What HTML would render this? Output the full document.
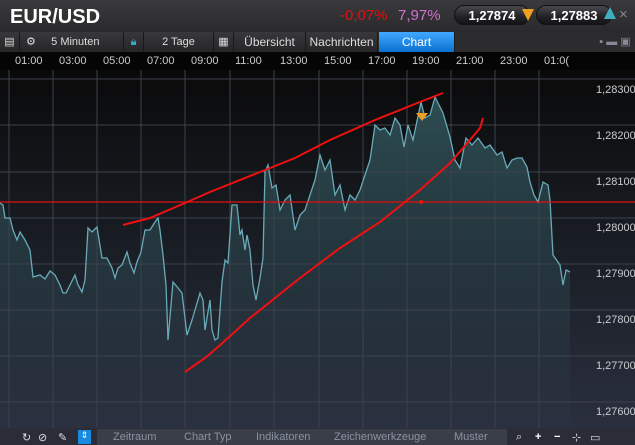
<!DOCTYPE html>
<html><head><meta charset="utf-8"><style>
*{margin:0;padding:0;box-sizing:border-box}
body{width:635px;height:445px;overflow:hidden;background:#111;font-family:"Liberation Sans",sans-serif;position:relative}
.top{position:absolute;left:0;top:0;width:635px;height:32px;background:linear-gradient(#3a3a3c,#2a2a2c)}
.title{position:absolute;left:10px;top:6px;color:#fff;font-size:20px;font-weight:bold}
.pill{position:absolute;top:5px;height:20px;border-radius:10px;background:linear-gradient(#4a4a4e,#222226 60%,#141418);color:#fff;font-weight:bold;font-size:13px;text-align:center;line-height:20px;border:1px solid #111}
.bar{position:absolute;left:0;top:32px;width:635px;height:20px;background:#2c2c2e}
.bar div{position:absolute;top:0;height:20px;line-height:20px;color:#ddd;font-size:11px;text-align:center;background:linear-gradient(#38383a,#262628);border-right:1px solid #1a1a1a}
.axis{position:absolute;left:0;top:52px;width:635px;height:18px;background:#050505;color:#ccc;font-size:11px}
.axis span{position:absolute;top:3px}
.bot{position:absolute;left:0;top:428px;width:635px;height:17px;background:#2a2d38}
.bot span{position:absolute;top:3px;color:#8a92a0;font-size:11px}
</style></head><body>
<div class="top">
<div class="title">EUR/USD</div>
<div style="position:absolute;left:340px;top:7px;color:#e01010;font-size:15px">-0,07%</div>
<div style="position:absolute;left:398px;top:7px;color:#d070d0;font-size:15px">7,97%</div>
<div class="pill" style="left:454px;width:76px">1,27874</div>
<div style="position:absolute;left:522px;top:9px;width:0;height:0;border-left:6px solid transparent;border-right:6px solid transparent;border-top:12px solid #f0a020"></div>
<div class="pill" style="left:536px;width:76px">1,27883</div>
<div style="position:absolute;left:604px;top:7px;width:0;height:0;border-left:6px solid transparent;border-right:6px solid transparent;border-bottom:12px solid #40b0c0"></div>
<div style="position:absolute;left:619px;top:6px;color:#889;font-size:15px">×</div>
</div>
<div class="bar">
<div style="left:0;width:20px">▤</div>
<div style="left:20px;width:104px;text-align:left;padding-left:6px">⚙ &nbsp;&nbsp;&nbsp;&nbsp;5 Minuten</div>
<div style="left:124px;width:20px;color:#3ac">🔒︎</div>
<div style="left:144px;width:70px">2 Tage</div>
<div style="left:214px;width:20px">▦</div>
<div style="left:234px;width:72px;font-size:12px">Übersicht</div>
<div style="left:306px;width:72px;font-size:12px">Nachrichten</div>
<div style="left:379px;width:76px;font-size:12px;color:#fff;background:linear-gradient(#40a8ff,#0a70d0)">Chart</div>
<div style="left:595px;width:40px;background:none;border:none;color:#889">▪ ▬ ▣</div>
</div>
<div class="axis">
<span style="left:15px">01:00</span><span style="left:59px">03:00</span><span style="left:103px">05:00</span><span style="left:147px">07:00</span><span style="left:191px">09:00</span><span style="left:235px">11:00</span><span style="left:280px">13:00</span><span style="left:324px">15:00</span><span style="left:368px">17:00</span><span style="left:412px">19:00</span><span style="left:456px">21:00</span><span style="left:500px">23:00</span><span style="left:544px">01:0(</span>
</div>
<svg style="position:absolute;left:0;top:70px" width="635" height="358" viewBox="0 70 635 358">
<defs><linearGradient id="bg" x1="0" y1="0" x2="0" y2="1"><stop offset="0" stop-color="#0a0a0a"/><stop offset="0.45" stop-color="#181c22"/><stop offset="1" stop-color="#2a2f3e"/></linearGradient>
<linearGradient id="fl" x1="0" y1="0" x2="0" y2="1"><stop offset="0" stop-color="#3a6a70" stop-opacity="0.7"/><stop offset="1" stop-color="#2a3a48" stop-opacity="0.15"/></linearGradient></defs>
<rect x="0" y="70" width="635" height="358" fill="url(#bg)"/>
<polygon fill="url(#fl)" points="0,203 3,205 5,218 10,218 13,230 17,240 20,232 25,240 30,250 33,277 40,275 45,279 50,271 55,275 60,285 63,293 66,293 70,285 75,275 78,285 82,292 85,280 88,228 92,232 97,227 102,258 107,258 112,268 115,278 118,268 122,265 127,252 130,263 134,273 137,262 141,252 145,230 150,230 155,222 158,218 160,230 163,255 166,285 168,340 173,282 178,288 182,293 187,335 192,320 195,310 200,293 203,300 205,330 210,300 212,330 215,340 218,338 222,282 225,260 228,263 232,205 237,205 240,235 242,230 245,250 247,235 250,250 253,285 256,300 260,278 263,258 265,172 268,165 272,188 276,185 280,210 285,200 290,195 295,230 300,215 305,210 310,195 315,180 320,155 325,170 330,160 335,195 340,185 345,210 350,195 355,200 360,190 365,175 370,160 375,125 380,130 385,128 390,135 395,118 400,125 404,147 408,125 413,140 421,102 425,118 430,115 435,97 443,113 450,137 455,160 460,168 466,138 472,145 478,138 485,148 490,145 497,155 502,152 507,168 512,160 517,158 522,158 527,167 530,182 534,195 538,202 543,182 548,185 550,200 553,255 560,265 563,285 566,270 570,272 570,428 0,428"/>
<g stroke="#3c424c" stroke-width="1">
<line x1="9" y1="70" x2="9" y2="428"/><line x1="53" y1="70" x2="53" y2="428"/><line x1="97" y1="70" x2="97" y2="428"/><line x1="141" y1="70" x2="141" y2="428"/><line x1="185" y1="70" x2="185" y2="428"/><line x1="230" y1="70" x2="230" y2="428"/><line x1="274" y1="70" x2="274" y2="428"/><line x1="319" y1="70" x2="319" y2="428"/><line x1="363" y1="70" x2="363" y2="428"/><line x1="407" y1="70" x2="407" y2="428"/><line x1="451" y1="70" x2="451" y2="428"/><line x1="495" y1="70" x2="495" y2="428"/><line x1="539" y1="70" x2="539" y2="428"/>
<line x1="0" y1="79" x2="635" y2="79"/><line x1="0" y1="125" x2="635" y2="125"/><line x1="0" y1="172" x2="635" y2="172"/><line x1="0" y1="218" x2="635" y2="218"/><line x1="0" y1="264" x2="635" y2="264"/><line x1="0" y1="310" x2="635" y2="310"/><line x1="0" y1="356" x2="635" y2="356"/><line x1="0" y1="402" x2="635" y2="402"/>
</g>
<polyline fill="none" stroke="#6aaab8" stroke-width="1.3" points="0,203 3,205 5,218 10,218 13,230 17,240 20,232 25,240 30,250 33,277 40,275 45,279 50,271 55,275 60,285 63,293 66,293 70,285 75,275 78,285 82,292 85,280 88,228 92,232 97,227 102,258 107,258 112,268 115,278 118,268 122,265 127,252 130,263 134,273 137,262 141,252 145,230 150,230 155,222 158,218 160,230 163,255 166,285 168,340 173,282 178,288 182,293 187,335 192,320 195,310 200,293 203,300 205,330 210,300 212,330 215,340 218,338 222,282 225,260 228,263 232,205 237,205 240,235 242,230 245,250 247,235 250,250 253,285 256,300 260,278 263,258 265,172 268,165 272,188 276,185 280,210 285,200 290,195 295,230 300,215 305,210 310,195 315,180 320,155 325,170 330,160 335,195 340,185 345,210 350,195 355,200 360,190 365,175 370,160 375,125 380,130 385,128 390,135 395,118 400,125 404,147 408,125 413,140 421,102 425,118 430,115 435,97 443,113 450,137 455,160 460,168 466,138 472,145 478,138 485,148 490,145 497,155 502,152 507,168 512,160 517,158 522,158 527,167 530,182 534,195 538,202 543,182 548,185 550,200 553,255 560,265 563,285 566,270 570,272"/>
<line x1="0" y1="202" x2="635" y2="202" stroke="#e01010" stroke-width="1.3"/>
<circle cx="421" cy="202" r="2" fill="#f01010"/>
<polyline fill="none" stroke="#f01010" stroke-width="2" points="123,225 150,218 185,203 210,192 220,188 265,170 295,158 330,140 375,120 405,108 425,100 443,93"/>
<polyline fill="none" stroke="#f01010" stroke-width="2" points="185,372 205,358 218,347 250,318 300,278 340,248 380,222 420,190 450,163 470,140 480,128 483,118"/>
<polygon points="416,113 428,113 422,121" fill="#f0a020"/>
<g fill="#c8ccd0" font-size="11" font-family="Liberation Sans,sans-serif">
<text x="596" y="93">1,28300</text><text x="596" y="139">1,28200</text><text x="596" y="185">1,28100</text><text x="596" y="231">1,28000</text><text x="596" y="277">1,27900</text><text x="596" y="323">1,27800</text><text x="596" y="369">1,27700</text><text x="596" y="415">1,27600</text>
</g>
</svg>
<div class="bot">
<span style="left:22px;color:#ddd">↻</span><span style="left:38px;color:#ddd">⊘</span><span style="left:58px;color:#ddd">✎</span>
<div style="position:absolute;left:78px;top:2px;width:13px;height:14px;background:#1a8ae0;color:#fff;font-size:9px;text-align:center">⇕</div>
<div style="position:absolute;left:97px;top:1px;width:410px;height:16px;background:#3a3e48"></div>
<span style="left:113px">Zeitraum</span><span style="left:184px">Chart Typ</span><span style="left:256px">Indikatoren</span><span style="left:334px">Zeichenwerkzeuge</span><span style="left:454px">Muster</span>
<span style="left:516px;color:#ddd">⌕</span><span style="left:535px;color:#fff;font-weight:bold">+</span><span style="left:554px;color:#fff;font-weight:bold">−</span><span style="left:572px;color:#ddd">⊹</span><span style="left:590px;color:#ddd">▭</span>
</div>
</body></html>
